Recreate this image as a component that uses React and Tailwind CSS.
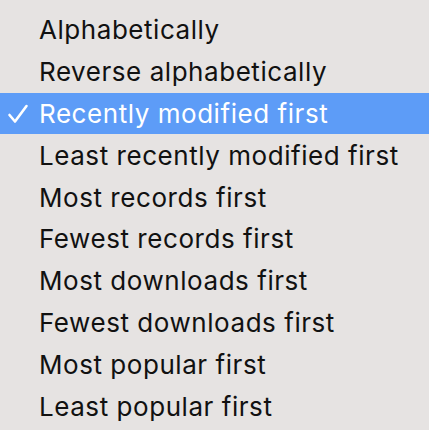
import React from "react";

const items = [
  "Alphabetically",
  "Reverse alphabetically",
  "Recently modified first",
  "Least recently modified first",
  "Most records first",
  "Fewest records first",
  "Most downloads first",
  "Fewest downloads first",
  "Most popular first",
  "Least popular first",
];

export default function App() {
  return (
    <div
      className="w-[429px] h-[430px] bg-[#e6e3e2] pt-[9px] overflow-hidden"
      style={{ fontFamily: "Inter, 'Liberation Sans', sans-serif" }}
    >
      <ul className="flex flex-col">
        {items.map((t, i) => {
          const sel = i === 2;
          return (
            <li
              key={t}
              className={`relative h-[41.8px] flex items-center pl-[39px] text-[26px] tracking-[0.55px] ${
                sel ? "bg-[#5d9cf7] text-white" : "text-[#111111]"
              }`}
            >
              {sel && (
                <svg
                  className="absolute left-[7px] top-[10px]"
                  width="22"
                  height="22"
                  viewBox="0 0 22 22"
                  fill="none"
                  stroke="white"
                  strokeWidth="2.6"
                  strokeLinecap="round"
                  strokeLinejoin="round"
                >
                  <path d="M2.5 12 L8 18.5 L19.5 3" />
                </svg>
              )}
              {t}
            </li>
          );
        })}
      </ul>
    </div>
  );
}
